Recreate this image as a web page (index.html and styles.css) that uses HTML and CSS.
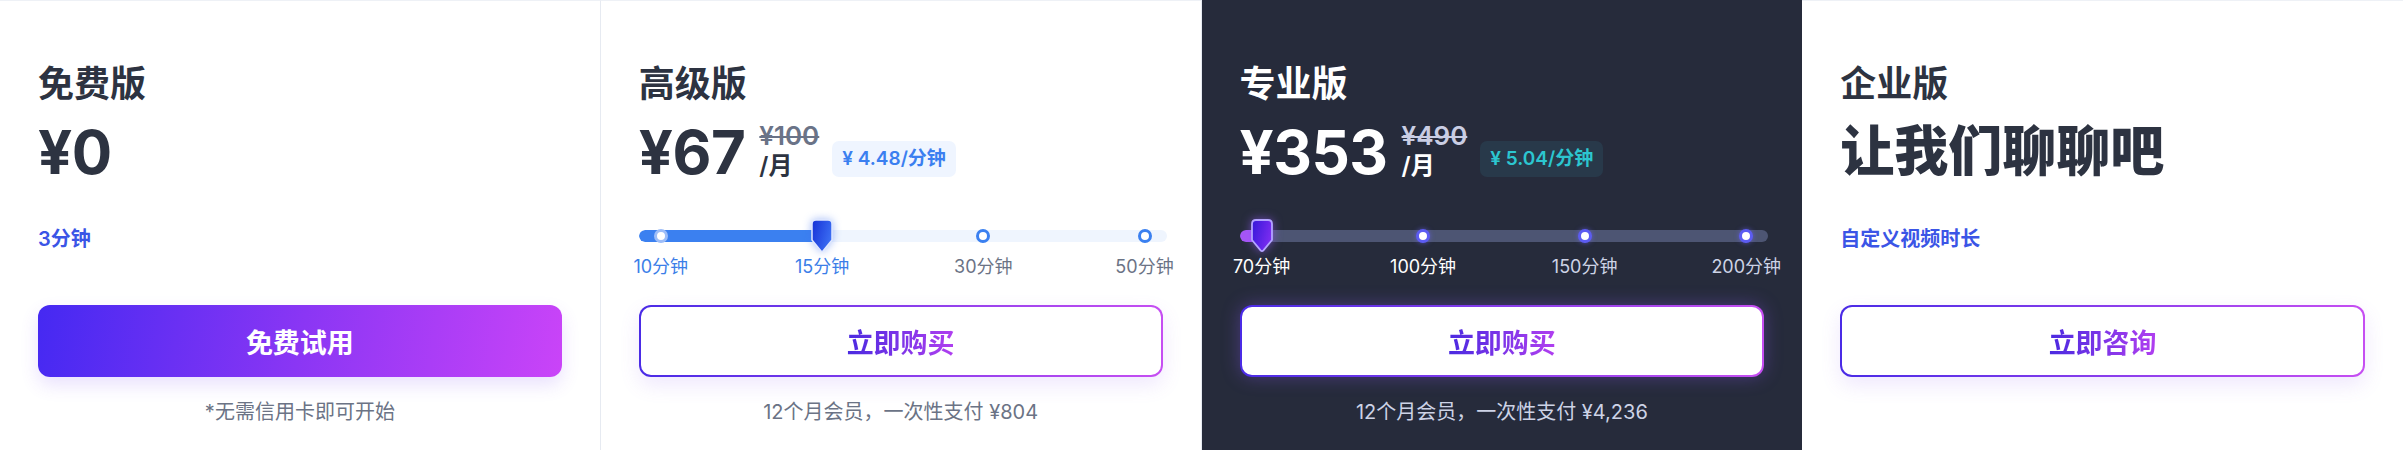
FILE: index.html
```html
<!DOCTYPE html>
<html lang="zh-CN">
<head>
<meta charset="utf-8">
<title>价格方案</title>
<link rel="stylesheet" href="styles.css">
</head>
<body>
<div class="plans">
  <section class="plan plan-light">
    <h2 class="plan-name">免费版</h2>
    <div class="price-row">
      <span class="price">¥0</span>
    </div>
    <div class="feature">
      <span class="minutes">3分钟</span>
    </div>
    <button class="btn btn-solid">免费试用</button>
    <p class="note">*无需信用卡即可开始</p>
  </section>

  <section class="plan plan-light">
    <h2 class="plan-name">高级版</h2>
    <div class="price-row">
      <span class="price">¥67</span>
      <span class="price-side">
        <span class="old-price">¥100</span>
        <span class="per">/月</span>
      </span>
      <span class="rate">¥ 4.48/分钟</span>
    </div>
    <div class="feature">
      <div class="slider">
        <div class="track"><div class="track-fill" style="width:35%"></div></div>
        <div class="stops">
          <div class="stop passed"><span class="dot"></span><span class="stop-label">10分钟</span></div>
          <div class="stop passed">
            <span class="dot"></span>
            <svg class="thumb" width="22" height="34" viewBox="0 0 22 34">
              <defs>
                <linearGradient id="tg1" x1="0" y1="0" x2="1" y2="0.4">
                  <stop offset="0" stop-color="#1631d6"/>
                  <stop offset="1" stop-color="#3a6cf2"/>
                </linearGradient>
              </defs>
              <path d="M5 1 H17 Q21 1 21 5 V21 L12.4 31.4 Q11 33 9.6 31.4 L1 21 V5 Q1 1 5 1 Z" fill="url(#tg1)" stroke="#dfe8ff" stroke-width="1.5"/>
            </svg>
            <span class="stop-label">15分钟</span>
          </div>
          <div class="stop"><span class="dot"></span><span class="stop-label">30分钟</span></div>
          <div class="stop"><span class="dot"></span><span class="stop-label">50分钟</span></div>
        </div>
      </div>
    </div>
    <button class="btn btn-outline"><span class="grad-text">立即购买</span></button>
    <p class="note">12个月会员，一次性支付 ¥804</p>
  </section>

  <section class="plan plan-dark">
    <h2 class="plan-name">专业版</h2>
    <div class="price-row">
      <span class="price">¥353</span>
      <span class="price-side">
        <span class="old-price">¥490</span>
        <span class="per">/月</span>
      </span>
      <span class="rate">¥ 5.04/分钟</span>
    </div>
    <div class="feature">
      <div class="slider">
        <div class="track"><div class="track-fill" style="width:4%"></div></div>
        <div class="stops">
          <div class="stop passed">
            <span class="dot"></span>
            <svg class="thumb" width="22" height="34" viewBox="0 0 22 34">
              <defs>
                <linearGradient id="tg2" x1="0" y1="0" x2="1" y2="0.4">
                  <stop offset="0" stop-color="#3418d8"/>
                  <stop offset="1" stop-color="#7a2cf0"/>
                </linearGradient>
              </defs>
              <path d="M5 1 H17 Q21 1 21 5 V21 L12.4 31.4 Q11 33 9.6 31.4 L1 21 V5 Q1 1 5 1 Z" fill="url(#tg2)" stroke="#b3a4ff" stroke-width="1.8"/>
            </svg>
            <span class="stop-label">70分钟</span>
          </div>
          <div class="stop near"><span class="dot"></span><span class="stop-label">100分钟</span></div>
          <div class="stop"><span class="dot"></span><span class="stop-label">150分钟</span></div>
          <div class="stop"><span class="dot"></span><span class="stop-label">200分钟</span></div>
        </div>
      </div>
    </div>
    <button class="btn btn-outline"><span class="grad-text">立即购买</span></button>
    <p class="note">12个月会员，一次性支付 ¥4,236</p>
  </section>

  <section class="plan plan-light plan-last">
    <h2 class="plan-name">企业版</h2>
    <div class="price-row">
      <span class="price price-cjk">让我们聊聊吧</span>
    </div>
    <div class="feature">
      <span class="minutes">自定义视频时长</span>
    </div>
    <button class="btn btn-outline"><span class="grad-text">立即咨询</span></button>
  </section>
</div>
</body>
</html>
```

FILE: styles.css
```css
* {
  box-sizing: border-box;
}

html, body {
  margin: 0;
  padding: 0;
  background: #ffffff;
}

body {
  font-family: "Inter", "Noto Sans CJK SC", sans-serif;
  color: #2d3341;
}

.plans {
  display: grid;
  grid-template-columns: repeat(4, 1fr);
  width: 100%;
  height: 450px;
}

.plan {
  display: flex;
  flex-direction: column;
  padding: 61px 38px 0;
  height: 450px;
  min-width: 0;
}

.plan-light {
  background: #ffffff;
  border-top: 1px solid #eef1f6;
  border-right: 1px solid #e6eaf1;
}

.plan-last {
  border-right: none;
}

.plan-dark {
  background: #262b3b;
  color: #ffffff;
  padding-top: 62px;
}

.plan-name {
  margin: 0;
  font-size: 36px;
  line-height: 44px;
  font-weight: 700;
}

.price-row {
  display: flex;
  align-items: flex-start;
  height: 60px;
  margin-top: 16px;
}

.price {
  font-size: 60px;
  line-height: 60px;
  font-weight: 700;
  letter-spacing: -0.5px;
}

.price-cjk {
  font-size: 54px;
  font-weight: 800;
  letter-spacing: 0;
}

.price-side {
  display: flex;
  flex-direction: column;
  margin-left: 14px;
}

.old-price {
  font-size: 26px;
  line-height: 28px;
  font-weight: 600;
  color: #6a7387;
  text-decoration: line-through;
  text-decoration-thickness: 2px;
}

.per {
  font-size: 24px;
  line-height: 32px;
  font-weight: 600;
}

.rate {
  margin-top: 19px;
  margin-left: 13px;
  height: 36px;
  padding: 0 10px;
  border-radius: 7px;
  font-size: 19px;
  line-height: 36px;
  font-weight: 600;
  background: #eff5ff;
  color: #3b7ff0;
  white-space: nowrap;
}

.plan-dark .old-price {
  color: #c9cde3;
}

.plan-dark .rate {
  background: #28394a;
  color: #2cc6d0;
}

.feature {
  height: 123px;
  display: flex;
  flex-direction: column;
}

.minutes {
  margin-top: 43px;
  font-size: 20px;
  line-height: 28px;
  font-weight: 600;
  color: #3b55e6;
}

/* slider */
.slider {
  display: grid;
  margin-top: 47px;
  margin-right: -4px;
}

.track,
.stops {
  grid-area: 1 / 1;
}

.track {
  align-self: start;
  margin-top: 1px;
  height: 12px;
  border-radius: 6px;
  background: #eff5fe;
  overflow: hidden;
}

.track-fill {
  height: 100%;
  border-radius: 6px;
  background: #3b80f0;
}

.plan-dark .track {
  background: #4d5573;
}

.plan-dark .track-fill {
  background: #a655f6;
}

.stops {
  display: flex;
  justify-content: space-between;
  padding: 0 22px;
}

.stop {
  position: relative;
  width: 0;
  display: flex;
  flex-direction: column;
  align-items: center;
}

.dot {
  flex: none;
  width: 14px;
  height: 14px;
  border-radius: 50%;
  background: #ffffff;
  border: 3px solid #3b80f0;
}

.stop.passed .dot {
  border-color: #9dbdf8;
}

.plan-dark .dot {
  border-color: #5c5cf2;
  box-shadow: 0 0 5px rgba(110, 100, 250, 0.6);
}

.stop-label {
  margin-top: 12px;
  font-size: 18px;
  line-height: 24px;
  white-space: nowrap;
  color: #6b7385;
}

.stop.passed .stop-label {
  color: #3b7ee8;
}

.plan-dark .stop-label {
  color: #cdd3e6;
}

.plan-dark .stop.passed .stop-label,
.plan-dark .stop.near .stop-label {
  color: #ffffff;
}

.thumb {
  position: absolute;
  top: -10px;
  left: -11px;
  filter: drop-shadow(0 0 4px rgba(59, 110, 240, 0.45));
}

.plan-dark .thumb {
  filter: drop-shadow(0 0 5px rgba(150, 90, 250, 0.6));
}

/* buttons */
.btn {
  flex: none;
  height: 72px;
  width: 100%;
  border-radius: 12px;
  font-family: inherit;
  font-size: 27px;
  font-weight: 700;
  cursor: pointer;
}

.btn-solid {
  border: none;
  color: #ffffff;
  background: linear-gradient(100deg, #4529f2 0%, #8a36f4 50%, #ca44f8 100%);
  box-shadow: 0 8px 18px rgba(120, 70, 240, 0.16);
}

.btn-outline {
  border: 2px solid transparent;
  background:
    linear-gradient(#ffffff, #ffffff) padding-box,
    linear-gradient(90deg, #4a2be6, #c64ef2) border-box;
  box-shadow: 0 8px 20px rgba(140, 90, 240, 0.14);
}

.plan-dark .btn-outline {
  box-shadow: 0 0 18px rgba(140, 90, 250, 0.35);
}

.grad-text {
  background: linear-gradient(90deg, #4a2ae0, #b13ff0);
  -webkit-background-clip: text;
  background-clip: text;
  color: transparent;
}

.note {
  margin: 21px 0 0;
  text-align: center;
  font-size: 20px;
  line-height: 28px;
  color: #6b7385;
}

.plan-dark .note {
  color: #cdd3e6;
}
```
